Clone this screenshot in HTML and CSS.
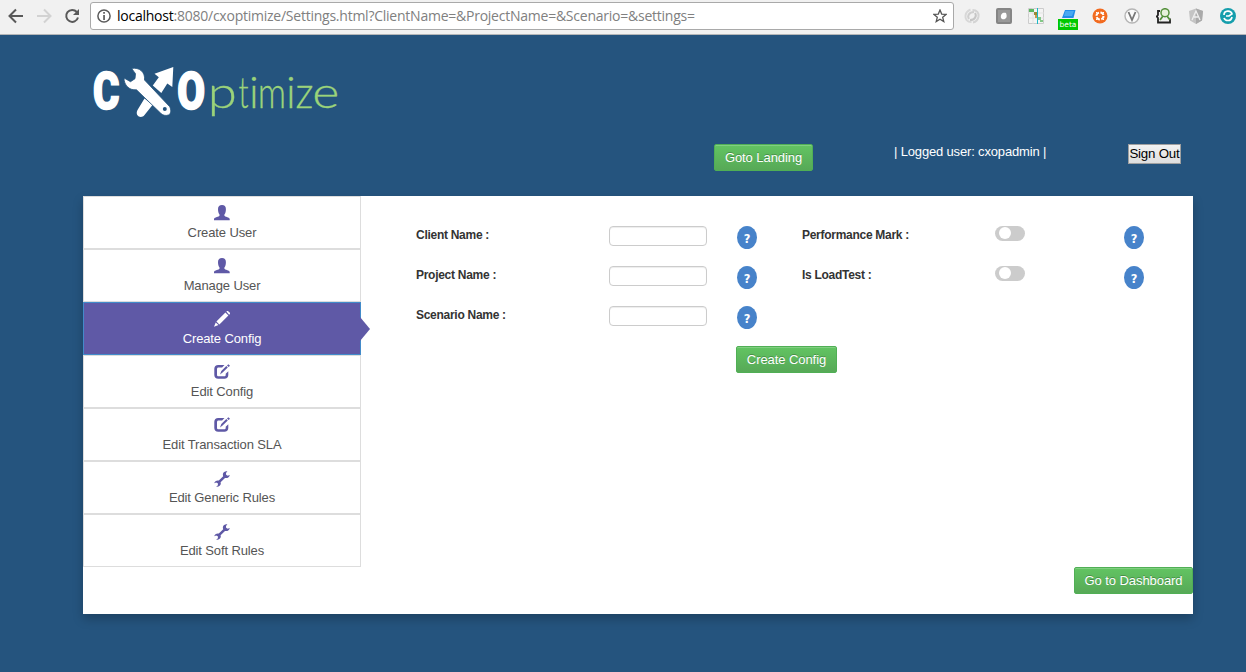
FILE: index.html
```html
<!DOCTYPE html>
<html lang="en">
<head>
<meta charset="utf-8">
<title>CXOptimize Settings</title>
<link rel="stylesheet" href="styles.css">
</head>
<body>
<svg class="defs" width="0" height="0">
  <symbol id="user" viewBox="0 0 16 16"><path d="M8 0C5.500 0 4 1.600 4 4c0 2.500.5 4.300 1.500 5.500v1.300c-.3 1-5.100 1.400-5.500 3.200V15.300h15.700V14c-.4-1.800-5-2.200-5.300-3.200V9.500c1-1.200 1.500-3 1.500-5.500C11.900 1.600 10.500 0 8 0z"/></symbol>
  <symbol id="pencil" viewBox="0 0 16 16"><path d="M12.300.6l.8-.5c.5-.3 1-.1 1.400.3l1.200 1.200c.4.4.5.9.2 1.300l-.8.9zM11.400 1.500l3 3L5.400 13.400l-3-3zM1.700 11.400l2.800 2.700L0 15.800z"/></symbol>
  <symbol id="edit" viewBox="0 0 16 16"><path d="M10.500 1H4.200C1.800 1 .3 2.500 .3 4.700v6.400c0 2.300 1.500 3.700 3.900 3.700h6.200c2.400 0 3.900-1.400 3.900-3.700V7.300l-2.600 2.500v1c0 1-.6 1.500-1.500 1.500H4.600c-1 0-1.600-.5-1.600-1.500V5.200c0-1 .6-1.600 1.600-1.600h3.500zM6 10.500L7.300 7l5-5 1.500 1.500-5.200 5zM13 1.400L14.300.3 16 1.800l-1.300 1.100z"/></symbol>
  <symbol id="wrench" viewBox="0 0 16 16"><path d="M13.400.3C11.500-.2 9.300.8 8.900 3c-.1.900 0 1.500.3 2.200L4.800 9.500C2.700 9 .6 10.200.2 12.300l2-.9 1.800 1.100-.2 2-1.800 1.100c2.400.7 5-1 4.800-3.400l-.2-1L11 6.900c2.200.6 4.500-.7 4.800-3l-2.100.9-1.600-1L12 1.900z"/></symbol>
</svg>

<header class="toolbar">
  <nav class="nav">
    <svg width="16" height="16" viewBox="0 0 16 16" class="arrow"><path d="M15 8H2M8 1.500L1.500 8 8 14.500"/></svg>
    <svg width="16" height="16" viewBox="0 0 16 16" class="arrow off"><path d="M1 8h13M8 1.500L14.500 8 8 14.500"/></svg>
    <svg width="16" height="16" viewBox="0 0 16 16" class="arrow"><path d="M12.800 4A6 6 0 1 0 14 9.500"/><path d="M15 1v6H9z" class="tip"/></svg>
  </nav>
  <div class="address">
    <svg width="14" height="14" viewBox="0 0 14 14"><circle cx="7" cy="7" r="6.100" fill="none" stroke="#5a5a5a" stroke-width="1.500"/><path d="M6.200 3h1.700v1.700H6.200zM6.200 6h1.700v5H6.200z" fill="#5a5a5a"/></svg>
    <span class="url"><b>localhost</b>:8080/cxoptimize/Settings.html?ClientName=&amp;ProjectName=&amp;Scenario=&amp;settings=</span>
    <svg width="14" height="14" viewBox="0 0 14 14" class="star"><path d="M7 1l1.700 4.100 4.400.3-3.400 2.900 1.100 4.300L7 10.300l-3.800 2.300 1.100-4.300L.9 5.400l4.400-.3z"/></svg>
  </div>
  <div class="extensions">
    <svg viewBox="0 0 16 16"><path d="M7.500 14C3 14 1 11 1.500 7.500 2 4.500 4 2.500 6.500 1.500" fill="none" stroke="#d8d8d8" stroke-width="2"/><path d="M5 11C3 8 5 4 10 4" fill="none" stroke="#cfcfcf" stroke-width="2"/><path d="M8.500 2C13 2 15 5 14.500 8.500 14 11.500 12 14 9 14.500" fill="none" stroke="#d4d4d4" stroke-width="2"/><path d="M11 5c2 3 0 7-5 7" fill="none" stroke="#c6c6c6" stroke-width="2"/></svg>
    <svg viewBox="0 0 16 16"><rect width="16" height="16" rx="2" fill="#858585"/><rect x="2" y="2" width="12" height="12" fill="#999"/><path d="M5 10c-1-4 2-6 5-5 2 5-1 7-4 6z" fill="#fff"/></svg>
    <svg viewBox="0 0 16 16"><path d="M.5.500h15v15H.5z" fill="#f4f4f4" stroke="#ccc"/><path d="M5 0v16M0 5h16M0 10h16" stroke="#e2e2e2"/><path d="M1 1h5v3H1z" fill="#5cb860"/><path d="M6 4h3v3H6z" fill="#9b8b35"/><path d="M7 7h2v3H7z" fill="#c99a4a"/><path d="M10 9h3v3h-3zM12 12h3v2h-3z" fill="#83c886"/><path d="M9.500 0v16" stroke="#19bac8"/></svg>
    <span class="beta-icon"><svg viewBox="0 0 16 16"><path d="M5 2h10.500l-2 8H2z" fill="#218ce8"/><path d="M5.500 3H14l-2 5H4z" fill="#49a9f2"/></svg><span class="beta">beta</span></span>
    <svg viewBox="0 0 16 16"><circle cx="8" cy="8" r="7.500" fill="#f26b20"/><circle cx="8" cy="8" r="3.500" fill="none" stroke="#fff" stroke-width="2" stroke-dasharray="4 1.500"/><path d="M4 4l1.500 1.500M12 4l-1.500 1.500M4 12l1.500-1.500M12 12l-1.500-1.500" stroke="#fff"/></svg>
    <svg viewBox="0 0 16 16"><circle cx="8" cy="8" r="7" fill="#fafafa" stroke="#b5b5b5" stroke-width="1.400"/><path d="M4.500 4L8 12l3.500-8" fill="none" stroke="#777" stroke-width="1.800"/></svg>
    <svg viewBox="0 0 16 16"><path d="M4 3H2v4L.800 8.500 2 10v4.500h12v-4" fill="none" stroke="#222" stroke-width="1.800"/><circle cx="9" cy="4.700" r="4" fill="#e6f1da" stroke="#55913c" stroke-width="1.500"/><path d="M7 8l-3 4M11 8l3 4" stroke="#55913c" stroke-width="1.800"/></svg>
    <svg viewBox="0 0 16 16"><path d="M8 .500L15 3l-1 9.500L8 16l-6-3.500L1 3z" fill="#c4c4c4"/><path d="M8 .500L15 3l-1 9.500L8 16z" fill="#aaa"/><path d="M4 12l4-9 4 9M6 9h4" fill="none" stroke="#eee" stroke-width="1.300"/></svg>
    <svg viewBox="0 0 16 16"><circle cx="8" cy="8" r="8" fill="#159eac"/><path d="M4 7c0-5 7-5 8-1L9 8H6M12 9c-1 5-7 4-8 1" fill="none" stroke="#fff" stroke-width="1.700"/></svg>
  </div>
</header>

<main class="page">
  <svg class="logo" width="250" height="56" viewBox="0 0 250 56">
    <g class="logo-caps">
      <text transform="translate(0 46) scale(.79 1)">C</text>
      <text transform="translate(84.200 46) scale(.79 1)">O</text>
    </g>
    <path d="M51.500 35.500L59.500 42 51.500 52c-3.500 4.500-10 .5-7-5z" fill="#fff"/>
    <path d="M80.300 4L61.500 10.700l4.300 3.500-6 8.300 8.500 7.500 6-9.500 5 3.500z" fill="#fff"/>
    <path d="M38.700 5.500C46 4 52.500 9 51.500 17L76.500 43.500c2 3 1.500 7.500-1 8.500-3 1-6 .3-8-2L43.500 26.800C36 27.500 31 22 31 15l6.500 3.700 4.500-3 .5-5z" fill="#fff" stroke="#25547e" stroke-width=".8"/>
    <circle cx="71.800" cy="46" r="2" fill="#25547e"/>
    <g class="logo-light">
      <text transform="translate(114.800 45) scale(1.200 1)">p</text>
      <text transform="translate(145.500 45) scale(.67 1)">t</text>
      <text transform="translate(156 45)">i</text>
      <text transform="translate(164.800 45) scale(.8 1)">m</text>
      <text transform="translate(193 45)">i</text>
      <text transform="translate(202.500 45) scale(.92 1)">z</text>
      <text transform="translate(219.300 45) scale(1.180 1)">e</text>
    </g>
  </svg>
  <div class="session">
    <button class="btn">Goto Landing</button>
    <span class="who">| Logged user: cxopadmin |</span>
    <button class="signout">Sign Out</button>
  </div>

  <section class="panel">
    <div class="content">
      <ul class="menu">
        <li><svg><use href="#user"/></svg>Create User</li>
        <li><svg><use href="#user"/></svg>Manage User</li>
        <li class="active"><svg><use href="#pencil"/></svg>Create Config</li>
        <li><svg><use href="#edit"/></svg>Edit Config</li>
        <li><svg><use href="#edit"/></svg>Edit Transaction SLA</li>
        <li class="low"><svg><use href="#wrench"/></svg>Edit Generic Rules</li>
        <li class="low"><svg><use href="#wrench"/></svg>Edit Soft Rules</li>
      </ul>
      <form class="form">
        <div class="fields">
          <label>Client Name :</label><input type="text"><span class="help">?</span>
          <label>Performance Mark :</label><span class="switch"></span><span class="help">?</span>
          <label>Project Name :</label><input type="text"><span class="help">?</span>
          <label>Is LoadTest :</label><span class="switch"></span><span class="help">?</span>
          <label>Scenario Name :</label><input type="text"><span class="help">?</span>
        </div>
        <button type="button" class="btn create">Create Config</button>
      </form>
    </div>
    <footer class="actions"><button class="btn dashboard">Go to Dashboard</button></footer>
  </section>
</main>
</body>
</html>
```

FILE: styles.css
```css
* { box-sizing: border-box; }
body {
  margin: 0;
  height: 672px;
  overflow: hidden;
  background: #25547e;
  font: 13px/18px "Liberation Sans", Arial, sans-serif;
}
svg { display: block; flex: none; }
.defs { position: absolute; }

.toolbar {
  display: flex;
  height: 35px;
  padding: 2px 2px 0 8px;
  background: #f1f1f1;
  border-bottom: 1px solid #b4b6b8;
}
.nav { display: flex; gap: 12px; width: 82px; padding-top: 6px; }
.arrow { fill: none; stroke: #595959; stroke-width: 2; }
.arrow.off { stroke: #d2d2d2; }
.arrow .tip { fill: #595959; stroke: none; }
.address {
  display: flex;
  align-items: center;
  width: 864px;
  height: 28px;
  padding: 0 6px;
  background: #fff;
  border: 1px solid #a9a9a9;
  border-radius: 3px;
}
.url {
  margin-left: 6px;
  color: #808080;
  font: 14px/20px "Open Sans", sans-serif;
  letter-spacing: -.24px;
  white-space: nowrap;
}
.url b { color: #000; font-weight: 400; }
.star { margin-left: auto; fill: none; stroke: #555; stroke-width: 1.3; }
.extensions { display: flex; flex: 1; justify-content: space-between; padding: 6px 8px 0 10px; }
.extensions svg { width: 16px; height: 16px; }
.beta-icon { position: relative; }
.beta {
  position: absolute;
  left: -2px;
  top: 11px;
  width: 20px;
  height: 11px;
  background: #00c800;
  color: #fff;
  font: 7.5px/11px "DejaVu Sans", sans-serif;
  text-align: center;
}

.page { width: 1110px; margin-left: 83px; padding-top: 28px; }
.logo { margin-left: 10px; overflow: visible; }
.logo-caps { fill: #fff; stroke: #fff; stroke-width: 1.6; font: 900 51px Roboto, sans-serif; }
.logo-light { fill: #9bd37a; stroke: #9bd37a; stroke-width: .3; font: 300 44px Lato, sans-serif; }
.session { display: flex; align-items: flex-start; height: 77px; padding: 25px 12px 0 631px; }
.btn {
  display: block;
  width: 99px;
  height: 27px;
  padding: 0;
  border: 1px solid #50af55;
  border-radius: 2px;
  background: linear-gradient(#62c462, #57a957);
  box-shadow: inset 0 1px 0 rgba(255,255,255,.2);
  color: #fff;
  font: 13px/18px "Liberation Sans", Arial, sans-serif;
  letter-spacing: -.07px;
  text-shadow: 0 -1px 0 rgba(0,0,0,.25);
}
.who { margin-left: 81px; color: #fff; line-height: 15px; letter-spacing: -.16px; white-space: nowrap; }
.signout {
  width: 53px;
  height: 20px;
  margin-left: auto;
  padding: 0;
  border: 1px solid #a0a0a0;
  background: linear-gradient(#f2f2f2, #dedede);
  color: #000;
  font: 13.3px/16px "Liberation Sans", Arial, sans-serif;
  letter-spacing: -.2px;
  white-space: nowrap;
}

.panel { height: 418px; background: #fff; box-shadow: 0 5px 10px rgba(0,0,0,.22); }
.content { display: flex; }
.menu { width: 278px; margin: 0; padding: 0; list-style: none; }
.menu li {
  display: flex;
  flex-direction: column;
  align-items: center;
  height: 53px;
  padding-top: 8px;
  border: 1px solid #ddd;
  color: #555;
  line-height: 24px;
  letter-spacing: -.12px;
}
.menu svg { width: 16px; height: 16px; fill: #5f59a6; }
.menu .low { padding-top: 9px; line-height: 22px; }
.menu .active {
  position: relative;
  border-color: #428bca;
  background: #5f59a6;
  color: #fff;
}
.menu .active svg { fill: #fff; }
.menu .active::after {
  content: "";
  position: absolute;
  left: 276px;
  top: 14px;
  border: solid transparent;
  border-width: 12px 0 12px 10px;
  border-left-color: #5f59a6;
}
.form { padding: 30px 0 0 55px; }
.fields {
  display: grid;
  grid-template-columns: 193px 128px 65px 193px 129px 20px;
  grid-auto-rows: 40px;
  align-items: start;
}
.fields label { color: #333; font-size: 12px; font-weight: 700; line-height: 19px; letter-spacing: -.28px; }
.fields input {
  width: 98px;
  height: 20px;
  border: 1px solid #ccc;
  border-radius: 4px;
  background: #fff;
  box-shadow: inset 0 1px 1px rgba(0,0,0,.075);
}
.help {
  width: 20px;
  height: 23px;
  border-radius: 50%;
  background: #4783ca;
  color: #fff;
  font: 700 11.5px/26px "DejaVu Sans", sans-serif;
  text-align: center;
}
.switch {
  width: 30px;
  height: 15px;
  padding: 1px 4px;
  border-radius: 8px;
  background: #ccc;
}
.switch::before {
  content: "";
  display: block;
  width: 12px;
  height: 12px;
  border-radius: 50%;
  background: #fff;
}
.create { width: 101px; margin-left: 320px; }
.actions { display: flex; justify-content: flex-end; }
.dashboard { width: 119px; }
```
